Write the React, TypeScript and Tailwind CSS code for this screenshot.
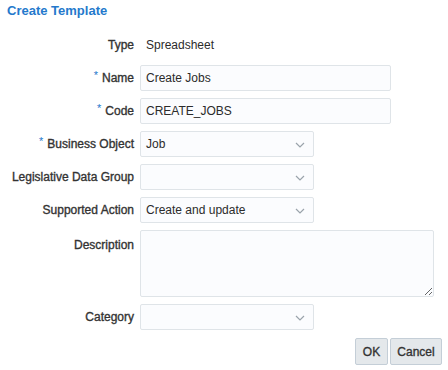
import React from "react";

const Chevron = () => (
  <svg width="10" height="6" viewBox="0 0 10 6" className="absolute right-[8px] top-[10px]">
    <path d="M1 1 L5 5 L9 1" fill="none" stroke="#9aa3ab" strokeWidth="1.2" />
  </svg>
);

const Label = ({ text, req, top }: { text: string; req?: boolean; top?: boolean }) => (
  <div className={`w-[134px] shrink-0 text-right text-[12px] text-[#333] [-webkit-text-stroke:0.35px_#333] ${top ? "pt-[6px]" : ""}`}>
    {req && <span className="text-[#1f78cc] text-[11px] relative top-[-3px] mr-[4px] [-webkit-text-stroke:0px]">*</span>}
    {text}
  </div>
);

const Input = ({ value, w }: { value: string; w: string }) => (
  <div className={`${w} h-[26px] border border-[#dfe4e8] bg-[#fbfcfe] rounded-[2px] flex items-center px-[5px] text-[12px] text-[#2b2b2b]`}>
    {value}
  </div>
);

const Select = ({ value }: { value: string }) => (
  <div className="relative w-[174px] h-[26px] border border-[#dfe4e8] bg-[#fbfcfe] rounded-[2px] flex items-center px-[5px] text-[12px] text-[#2b2b2b]">
    {value}
    <Chevron />
  </div>
);

export default function App() {
  return (
    <div className="w-[448px] h-[370px] bg-white font-['Liberation_Sans',Arial,sans-serif] text-[#2b2b2b] overflow-hidden">
      <h1 className="pl-[7px] pt-[3px] text-[13px] leading-[16px] font-bold text-[#2479cc]">Create Template</h1>
      <div className="flex flex-col mt-[18px]">
        <div className="flex items-center gap-[6px] h-[16px]">
          <Label text="Type" />
          <div className="text-[12px] pl-[6px]">Spreadsheet</div>
        </div>
        <div className="flex items-center gap-[6px] mt-[12px]">
          <Label text="Name" req />
          <Input value="Create Jobs" w="w-[251px]" />
        </div>
        <div className="flex items-center gap-[6px] mt-[7px]">
          <Label text="Code" req />
          <Input value="CREATE_JOBS" w="w-[251px]" />
        </div>
        <div className="flex items-center gap-[6px] mt-[7px]">
          <Label text="Business Object" req />
          <Select value="Job" />
        </div>
        <div className="flex items-center gap-[6px] mt-[7px]">
          <Label text="Legislative Data Group" />
          <Select value="" />
        </div>
        <div className="flex items-center gap-[6px] mt-[7px]">
          <Label text="Supported Action" />
          <Select value="Create and update" />
        </div>
        <div className="flex items-start gap-[6px] mt-[7px]">
          <Label text="Description" top />
          <textarea
            readOnly
            className="w-[294px] h-[67px] border border-[#dfe4e8] bg-[#fbfcfe] rounded-[2px] resize outline-none"
          />
        </div>
        <div className="flex items-center gap-[6px] mt-[7px]">
          <Label text="Category" />
          <Select value="" />
        </div>
        <div className="flex justify-end gap-[2px] mt-[8px] pr-[6px]">
          <button className="w-[33px] h-[27px] border border-[#c4ced7] bg-[#e4e8eb] rounded-[2px] text-[12px] text-[#333] [-webkit-text-stroke:0.35px_#333]">OK</button>
          <button className="w-[52px] h-[27px] border border-[#c4ced7] bg-[#e4e8eb] rounded-[2px] text-[12px] text-[#333] [-webkit-text-stroke:0.35px_#333]">Cancel</button>
        </div>
      </div>
    </div>
  );
}
